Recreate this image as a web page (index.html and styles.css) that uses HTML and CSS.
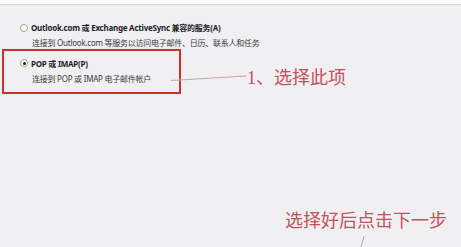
FILE: index.html
```html
<!DOCTYPE html>
<html lang="zh-CN">
<head>
<meta charset="utf-8">
<title>添加帐户</title>
<link rel="stylesheet" href="styles.css">
</head>
<body>
<div class="page">
  <div class="topbar"></div>
  <ul class="options">
    <li class="option">
      <span class="radio"></span>
      <div class="option-text">
        <div class="option-title">Outlook.com 或 Exchange ActiveSync 兼容的服务(A)</div>
        <div class="option-desc">连接到 Outlook.com 等服务以访问电子邮件、日历、联系人和任务</div>
      </div>
    </li>
    <li class="option">
      <span class="radio checked"></span>
      <div class="option-text">
        <div class="option-title">POP 或 IMAP(P)</div>
        <div class="option-desc">连接到 POP 或 IMAP 电子邮件帐户</div>
      </div>
    </li>
  </ul>

  <div class="highlight-box"></div>
  <svg class="annotation-lines" width="461" height="247" viewBox="0 0 461 247">
    <line x1="171" y1="80.5" x2="246" y2="76" stroke="#c9a3aa" stroke-width="1"/>
    <line x1="364" y1="236" x2="361" y2="247" stroke="#b9a4a8" stroke-width="1"/>
  </svg>
  <div class="note note-one">1、选择此项</div>
  <div class="note note-two">选择好后点击下一步</div>
</div>
</body>
</html>
```

FILE: styles.css
```css
* { box-sizing: border-box; }
html, body {
  margin: 0;
  padding: 0;
  width: 461px;
  height: 247px;
  overflow: hidden;
  background: #f0eff2;
}
.page {
  position: relative;
  width: 461px;
  height: 247px;
  font-family: "Noto Sans", "Noto Sans CJK SC", sans-serif;
  color: #262626;
}
.topbar {
  height: 5px;
  background: #fbfbfc;
  border-bottom: 1px solid #d4d4d6;
}
.options {
  list-style: none;
  margin: 0;
  padding: 18px 0 0 20px;
  display: flex;
  flex-direction: column;
  gap: 11.5px;
}
.option {
  display: flex;
  align-items: flex-start;
  gap: 3px;
}
.radio {
  flex: none;
  width: 8px;
  height: 8px;
  margin-top: 0.5px;
  border-radius: 50%;
  border: 1px solid #a0a0a0;
  background: #ffffff;
  position: relative;
}
.radio.checked::after {
  content: "";
  position: absolute;
  left: 1.5px;
  top: 1.5px;
  width: 3px;
  height: 3px;
  border-radius: 50%;
  background: #222;
}
.option-text {
  display: flex;
  flex-direction: column;
  gap: 6px;
}
.option-title {
  font-size: 8px;
  line-height: 9px;
  letter-spacing: -0.25px;
  font-weight: bold;
  color: #1e1e1e;
  white-space: nowrap;
}
.option-desc {
  font-size: 8px;
  line-height: 9px;
  letter-spacing: -0.25px;
  color: #3a3a3a;
  white-space: nowrap;
  padding-left: 1px;
}
.highlight-box {
  position: absolute;
  left: 2px;
  top: 49px;
  width: 179px;
  height: 45px;
  border: 2px solid #c8312e;
}
.annotation-lines {
  position: absolute;
  left: 0;
  top: 0;
}
.note {
  position: absolute;
  font-family: "Liberation Serif", "Noto Sans CJK SC", serif;
  font-size: 18px;
  line-height: 20px;
  color: #c4505a;
  white-space: nowrap;
}
.note-one {
  left: 247px;
  top: 68px;
}
.note-two {
  left: 285px;
  top: 211px;
}
```
